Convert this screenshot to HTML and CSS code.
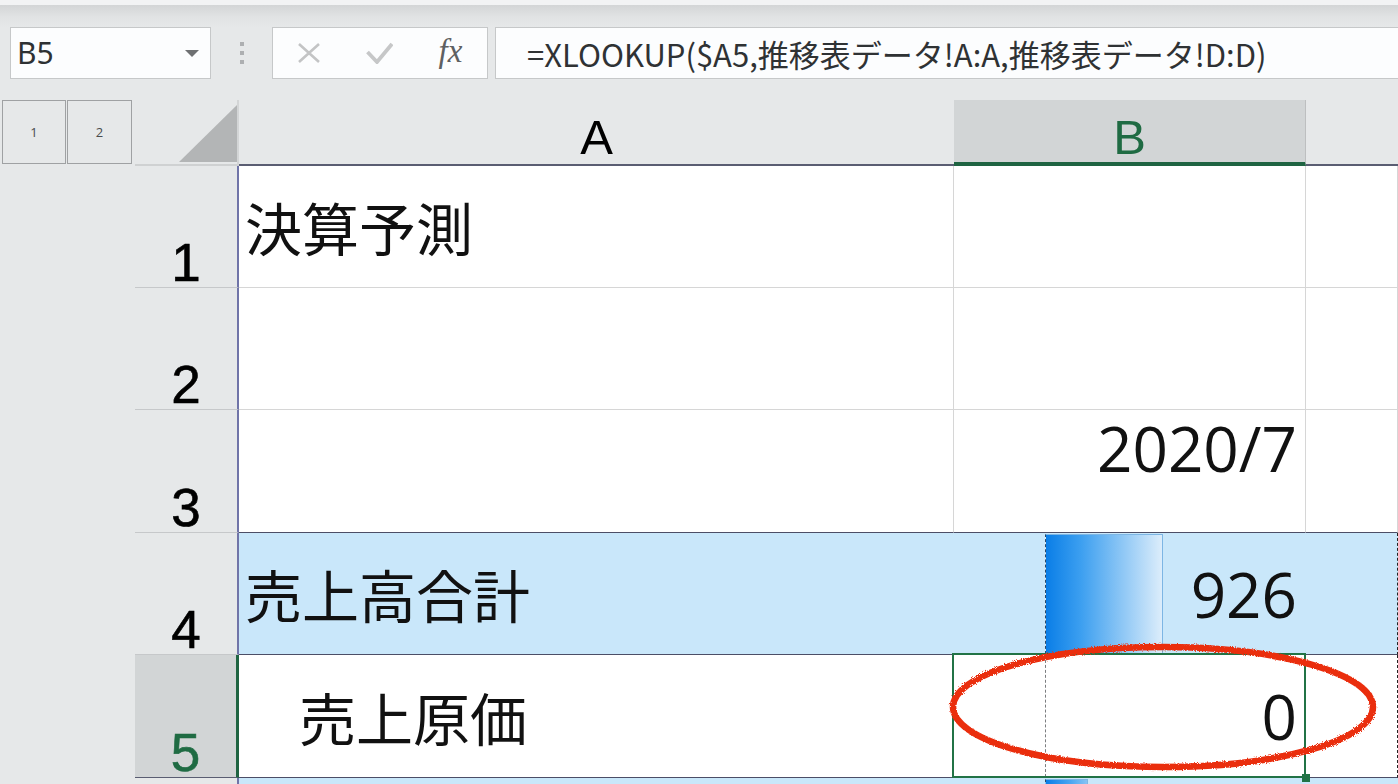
FILE: index.html
```html
<!DOCTYPE html>
<html lang="ja">
<head>
<meta charset="utf-8">
<title>Excel XLOOKUP</title>
<link rel="stylesheet" href="styles.css">
</head>
<body>
<div class="topstrip"></div>
<div class="fbar">
  <div class="namebox">
    <span class="name">B5</span>
    <span class="caret"></span>
  </div>
  <div class="grip"><i></i><i></i><i></i></div>
  <div class="fnbox">
    <span class="slot">
      <svg width="24" height="20" viewBox="0 0 24 20"><path d="M2 1 L22 19 M22 1 L2 19" stroke="#c3c4c5" stroke-width="2.6" fill="none"/></svg>
    </span>
    <span class="slot">
      <svg width="27" height="22" viewBox="0 0 27 22"><path d="M1.5 10 L11 20 L26 2" stroke="#c6c7c8" stroke-width="3.8" fill="none"/></svg>
    </span>
    <span class="slot"><span class="fx">fx</span></span>
  </div>
  <div class="formula">=XLOOKUP($A5,推移表データ!A:A,推移表データ!D:D)</div>
</div>

<div class="sheet">
  <!-- header row -->
  <div class="out">
    <div class="lvl">1</div>
    <div class="lvl">2</div>
  </div>
  <div class="corner"><span class="tri"></span></div>
  <div class="colh">A</div>
  <div class="colh sel">B</div>
  <div class="colh last"></div>

  <!-- row 1 -->
  <div class="out"></div>
  <div class="rh">1</div>
  <div class="cell a">決算予測</div>
  <div class="cell b"></div>
  <div class="cell c"></div>

  <!-- row 2 -->
  <div class="out"></div>
  <div class="rh">2</div>
  <div class="cell a"></div>
  <div class="cell b"></div>
  <div class="cell c"></div>

  <!-- row 3 -->
  <div class="out"></div>
  <div class="rh">3</div>
  <div class="cell a dk"></div>
  <div class="cell b num top dk">2020/7</div>
  <div class="cell c dk"></div>

  <!-- row 4 -->
  <div class="out"></div>
  <div class="rh">4</div>
  <div class="cell a hl dk">売上高合計</div>
  <div class="cell b num hl dk">
    <span class="bar"></span>
    <span class="val">926</span>
  </div>
  <div class="cell c hl dk edge"></div>

  <!-- row 5 -->
  <div class="out"></div>
  <div class="rh sel">5</div>
  <div class="cell a dk indent">売上原価</div>
  <div class="cell b num dk">
    <span class="dash"></span>
    <span class="val">0</span>
    <span class="selbox"><span class="handle"></span></span>
  </div>
  <div class="cell c dk edge"></div>

  <!-- row 6 (only its top edge is visible) -->
  <div class="out"></div>
  <div class="rh"></div>
  <div class="cell a hl"></div>
  <div class="cell b hl"><span class="bar small"></span></div>
  <div class="cell c hl"></div>

  <svg class="mark" width="1398" height="684" viewBox="0 0 1398 684">
    <defs>
      <filter id="rough" x="-5%" y="-20%" width="110%" height="140%">
        <feTurbulence type="fractalNoise" baseFrequency="0.9" numOctaves="2" seed="3"/>
        <feDisplacementMap in="SourceGraphic" scale="3.5"/>
      </filter>
    </defs>
    <ellipse cx="1163" cy="607" rx="210" ry="60" fill="none" stroke="#ea2e10" stroke-width="6.5" filter="url(#rough)"/>
  </svg>
</div>
</body>
</html>
```

FILE: styles.css
```css
html, body {
  margin: 0;
  padding: 0;
}
body {
  width: 1398px;
  height: 784px;
  overflow: hidden;
  background: #e6e8e9;
  font-family: "Noto Sans", "Noto Sans CJK JP", sans-serif;
}

.topstrip {
  height: 5px;
  background: #f2f3f4;
}

.fbar {
  height: 95px;
  box-sizing: border-box;
  padding-top: 22px;
  display: flex;
  align-items: flex-start;
  background: linear-gradient(to bottom, #d3d5d6 0px, #e1e3e4 12px, #e6e8e9 22px);
}

.namebox {
  margin-left: 10px;
  width: 201px;
  height: 52px;
  box-sizing: border-box;
  border: 1px solid #c6c8c9;
  background: #fcfdfe;
  display: flex;
  align-items: center;
  justify-content: space-between;
  padding: 0 11px 0 6px;
}
.name {
  font-family: "Noto Sans", sans-serif;
  font-size: 30px;
  color: #2e3133;
  line-height: 1;
}
.caret {
  width: 0;
  height: 0;
  border-left: 7px solid transparent;
  border-right: 7px solid transparent;
  border-top: 7px solid #6e7072;
}

.grip {
  width: 61px;
  height: 52px;
  display: flex;
  flex-direction: column;
  align-items: center;
  justify-content: center;
  gap: 5px;
}
.grip i {
  display: block;
  width: 4px;
  height: 4px;
  background: #adafb1;
}

.fnbox {
  width: 216px;
  height: 52px;
  box-sizing: border-box;
  border: 1px solid #c6c8c9;
  background: #fcfdfe;
  display: flex;
  align-items: center;
}
.slot {
  width: 71px;
  height: 50px;
  display: flex;
  align-items: center;
  justify-content: center;
}
.fx {
  font-family: "Liberation Serif", serif;
  font-style: italic;
  font-size: 33px;
  color: #5e6062;
  line-height: 1;
  padding-bottom: 3px;
}

.formula {
  flex: 1;
  margin-left: 7px;
  margin-right: -2px;
  height: 52px;
  box-sizing: border-box;
  border: 1px solid #c6c8c9;
  background: #fcfdfe;
  display: flex;
  align-items: center;
  padding-left: 31px;
  font-family: "Noto Sans CJK JP", sans-serif;
  font-size: 31px;
  color: #2f3234;
  white-space: nowrap;
  overflow: hidden;
}

/* ---------- sheet ---------- */
.sheet {
  position: relative;
  display: grid;
  grid-template-columns: 135px 104px 715px 352px 92px;
  grid-template-rows: 66px 122px 122px 123px 122px 123px 60px;
  height: 684px;
  overflow: hidden;
}

.out {
  background: #e6e8e9;
  display: flex;
  align-items: flex-start;
  padding-left: 2px;
}
.lvl {
  width: 64px;
  height: 64px;
  box-sizing: border-box;
  border: 1px solid #9fa1a3;
  display: flex;
  align-items: center;
  justify-content: center;
  font-family: "Open Sans", sans-serif;
  font-size: 13px;
  color: #4a4c4e;
}
.lvl + .lvl {
  margin-left: 1px;
  width: 65px;
}

.corner {
  box-sizing: border-box;
  border-right: 2px solid #d3d5d6;
  border-bottom: 2px solid #cfd1d2;
  display: flex;
  align-items: flex-end;
  justify-content: flex-end;
  padding: 0 0 2px 0;
}
.tri {
  width: 58px;
  height: 57px;
  background: #b3b5b6;
  clip-path: polygon(100% 0, 100% 100%, 0 100%);
}

.colh {
  box-sizing: border-box;
  border-bottom: 2px solid #5a5d72;
  display: flex;
  align-items: flex-end;
  justify-content: center;
  padding-bottom: 2px;
  font-family: "Liberation Sans", Arial, sans-serif;
  font-size: 49px;
  line-height: 49px;
  color: #000;
}
.colh.sel {
  background: #d2d5d6;
  color: #1f6b43;
  border-bottom: 4px solid #1f6442;
  border-right: 1px solid #bdbfc0;
  padding-bottom: 0;
}

.rh {
  box-sizing: border-box;
  border-right: 2px solid #7074a8;
  border-bottom: 1px solid #c6c8ca;
  display: flex;
  align-items: flex-end;
  justify-content: center;
  font-family: "Liberation Sans", Arial, sans-serif;
  font-size: 53px;
  line-height: 48px;
  color: #000;
  -webkit-text-stroke: 0.6px currentColor;
}
.rh.sel {
  background: #d2d5d6;
  color: #1f6b43;
  border-right-color: #1f6442;
  border-right-width: 3px;
  border-bottom-color: #5a5d72;
}

.cell {
  position: relative;
  box-sizing: border-box;
  background: #fff;
  border-right: 1px solid #d6d6d6;
  border-bottom: 1px solid #d6d6d6;
  display: flex;
  align-items: center;
  font-family: "Noto Sans CJK JP", sans-serif;
  font-size: 57px;
  line-height: 1;
  color: #111;
  white-space: nowrap;
}
.cell.a {
  padding-left: 6px;
}
.cell.a.indent {
  padding-left: 60px;
}
.cell.dk {
  border-bottom-color: #4c4e66;
}
.cell.hl {
  background: #c9e7fa;
  border-right-color: #c9e7fa;
}
.cell.edge {
  border-right: 1px dashed #222;
}
.cell.num {
  justify-content: flex-end;
  padding-right: 8px;
  font-family: "Open Sans", sans-serif;
  font-size: 62px;
}
.cell.num.top {
  align-items: flex-start;
  padding-top: 7px;
}
.val {
  position: relative;
  z-index: 1;
}

.bar {
  position: absolute;
  left: 91px;
  top: 1px;
  bottom: 0;
  width: 118px;
  box-sizing: border-box;
  border-left: 1px dashed #2c4966;
  border-top: 1px solid #7db6e4;
  border-right: 1px solid #7db6e4;
  background: linear-gradient(to right, #0a7ee7 0%, #3c9ff0 30%, #8cc6f5 65%, #dcedfb 100%);
}
.bar.small {
  width: 43px;
  background: linear-gradient(to right, #0a7ee7 0%, #4aa6f1 60%, #86c3f4 100%);
}

.dash {
  position: absolute;
  left: 91px;
  top: 0;
  bottom: 0;
  border-left: 1px dashed #7c7e80;
}

.selbox {
  position: absolute;
  left: -2px;
  top: -2px;
  right: -1px;
  bottom: -1px;
  border: 2px solid #217346;
  z-index: 2;
}
.handle {
  position: absolute;
  right: -6px;
  bottom: -6px;
  width: 8px;
  height: 8px;
  background: #217346;
}

.mark {
  position: absolute;
  left: 0;
  top: 0;
  pointer-events: none;
  z-index: 5;
}
```
